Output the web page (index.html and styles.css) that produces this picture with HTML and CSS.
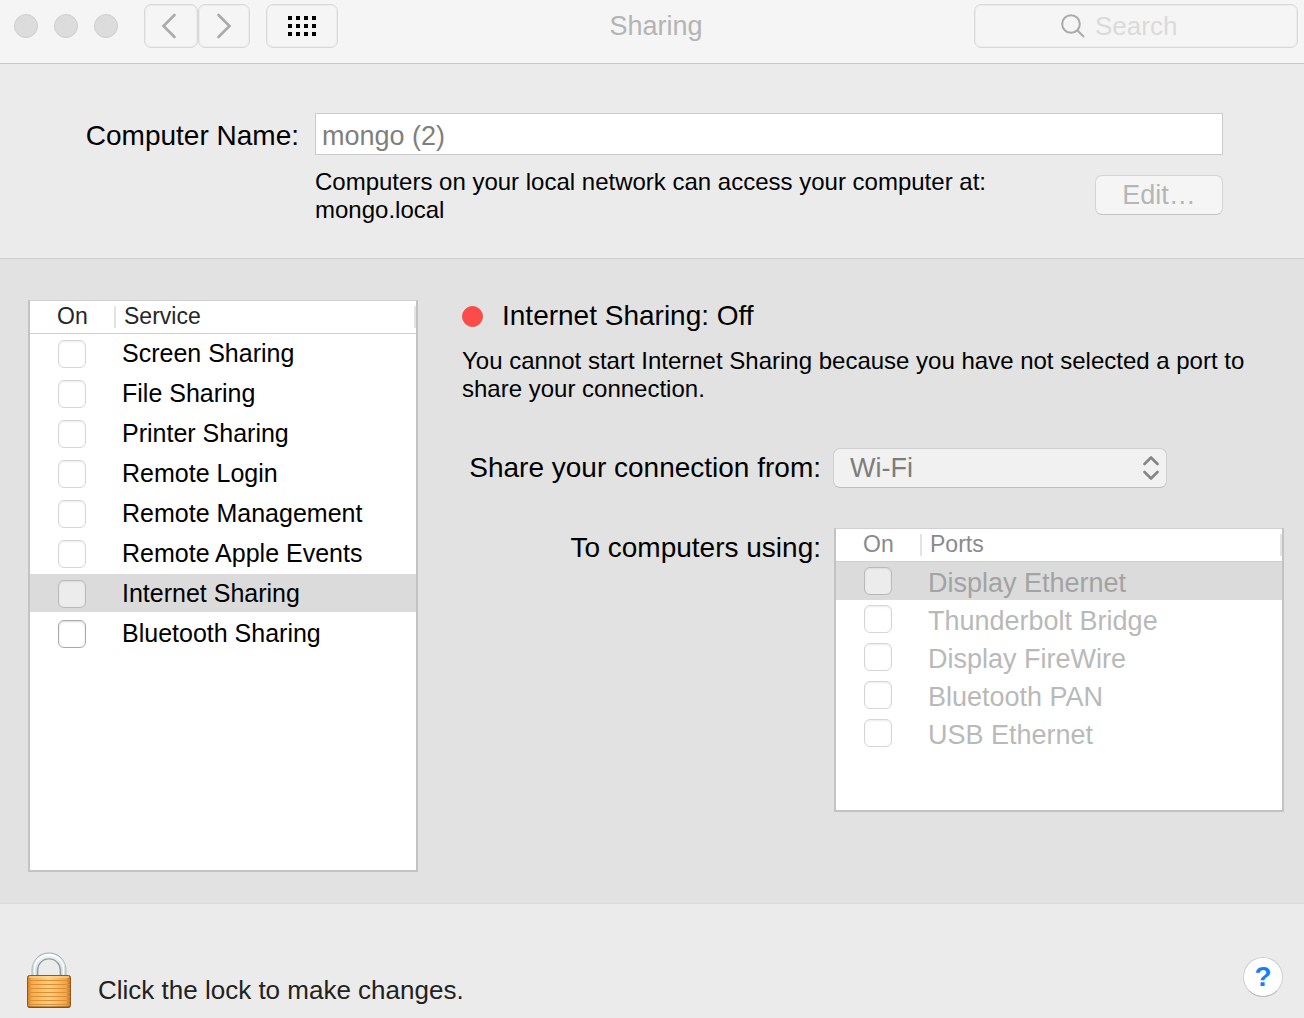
FILE: index.html
```html
<!DOCTYPE html>
<html lang="en">
<head>
<meta charset="utf-8">
<title>Sharing</title>
<link rel="stylesheet" href="styles.css">
</head>
<body>
<header class="toolbar">
  <div class="toolbar-left">
    <div class="lights">
      <button class="light" aria-label="Close"></button>
      <button class="light" aria-label="Minimize"></button>
      <button class="light" aria-label="Zoom"></button>
    </div>
    <div class="nav">
      <button class="tool back" aria-label="Back">
        <svg width="16" height="26" viewBox="0 0 16 26"><path d="M13.500 2 2.500 13l11 11" fill="none" stroke="#aaa" stroke-width="2.600" stroke-linecap="round"/></svg>
      </button>
      <button class="tool forward" aria-label="Forward">
        <svg width="16" height="26" viewBox="0 0 16 26"><path d="M2.500 2l11 11-11 11" fill="none" stroke="#aaa" stroke-width="2.600" stroke-linecap="round"/></svg>
      </button>
    </div>
    <button class="tool grid" aria-label="Show All">
      <svg width="28" height="20" viewBox="0 0 28 20"><path d="M0 0h4v4H0zM8 0h4v4H8zM16 0h4v4h-4zM24 0h4v4h-4zM0 8h4v4H0zM8 8h4v4H8zM16 8h4v4h-4zM24 8h4v4h-4zM0 16h4v4H0zM8 16h4v4H8zM16 16h4v4h-4zM24 16h4v4h-4z"/></svg>
    </button>
  </div>
  <h1 class="title">Sharing</h1>
  <label class="search">
    <svg width="24" height="24" viewBox="0 0 24 24" fill="none" stroke="#aaa" stroke-width="2"><circle cx="10" cy="10" r="8.800"/><path d="M16.200 16.200 23 23"/></svg>
    <input class="search-input" type="search" placeholder="Search" aria-label="Search">
  </label>
</header>

<section class="identity">
  <label class="identity-label" for="computer-name">Computer Name:</label>
  <input class="name-input" id="computer-name" type="text" value="mongo (2)" disabled>
  <div class="identity-info">
    <p class="small">Computers on your local network can access your computer at:<br>mongo.local</p>
    <button class="edit" disabled>Edit…</button>
  </div>
</section>

<main class="sharing">
  <div class="list services">
    <table>
      <thead><tr><th class="on">On</th><th>Service</th></tr></thead>
      <tbody>
        <tr><td><input type="checkbox" id="s1" disabled></td><td><label for="s1">Screen Sharing</label></td></tr>
        <tr><td><input type="checkbox" id="s2" disabled></td><td><label for="s2">File Sharing</label></td></tr>
        <tr><td><input type="checkbox" id="s3" disabled></td><td><label for="s3">Printer Sharing</label></td></tr>
        <tr><td><input type="checkbox" id="s4" disabled></td><td><label for="s4">Remote Login</label></td></tr>
        <tr><td><input type="checkbox" id="s5" disabled></td><td><label for="s5">Remote Management</label></td></tr>
        <tr><td><input type="checkbox" id="s6" disabled></td><td><label for="s6">Remote Apple Events</label></td></tr>
        <tr class="selected"><td><input type="checkbox" id="s7" disabled></td><td><label for="s7">Internet Sharing</label></td></tr>
        <tr><td><input type="checkbox" id="s8"></td><td><label for="s8">Bluetooth Sharing</label></td></tr>
      </tbody>
    </table>
  </div>

  <div class="details">
    <h2 class="status"><span class="dot"></span>Internet Sharing: Off</h2>
    <p class="small">You cannot start Internet Sharing because you have not selected a port to share your connection.</p>
    <div class="form">
      <label class="form-label" for="source">Share your connection from:</label>
      <div class="popup">
        <select id="source" disabled><option>Wi-Fi</option></select>
        <svg width="16" height="24" viewBox="0 0 16 24" fill="none" stroke="#858585" stroke-width="2.600" stroke-linecap="round" stroke-linejoin="round"><path d="M1.500 8 8 1.500 14.500 8M1.500 16 8 22.500 14.500 16"/></svg>
      </div>
      <div class="form-label" id="ports-label">To computers using:</div>
      <div class="list ports">
        <table aria-labelledby="ports-label">
          <thead><tr><th class="on">On</th><th>Ports</th></tr></thead>
          <tbody>
            <tr class="selected"><td><input type="checkbox" id="p1" disabled></td><td><label for="p1">Display Ethernet</label></td></tr>
            <tr><td><input type="checkbox" id="p2" disabled></td><td><label for="p2">Thunderbolt Bridge</label></td></tr>
            <tr><td><input type="checkbox" id="p3" disabled></td><td><label for="p3">Display FireWire</label></td></tr>
            <tr><td><input type="checkbox" id="p4" disabled></td><td><label for="p4">Bluetooth PAN</label></td></tr>
            <tr><td><input type="checkbox" id="p5" disabled></td><td><label for="p5">USB Ethernet</label></td></tr>
          </tbody>
        </table>
      </div>
    </div>
  </div>
</main>

<footer class="footer">
  <button class="lock" aria-labelledby="lock-text">
    <svg width="44" height="56" viewBox="0 0 44 56">
      <defs>
        <linearGradient id="brass" x1="0" x2="1" y1="0" y2="0"><stop offset="0" stop-color="#c87822"/><stop offset=".1" stop-color="#f3ad4c"/><stop offset=".5" stop-color="#ffcf80"/><stop offset=".9" stop-color="#f0a646"/><stop offset="1" stop-color="#b96b1c"/></linearGradient>
        <linearGradient id="steel" x1="0" x2="0" y1="0" y2="1"><stop offset="0" stop-color="#eef3f5"/><stop offset="1" stop-color="#c3ced4"/></linearGradient>
      </defs>
      <path d="M8 26V18a14 14 0 0 1 28 0V26" fill="none" stroke="#a3afb5" stroke-width="6.800"/>
      <path d="M10.500 26V18a11.500 11.500 0 0 1 23 0V26" fill="none" stroke="#7f8d95" stroke-width="1.200"/>
      <path d="M7.800 26V18a14.200 14.200 0 0 1 28.400 0V26" fill="none" stroke="url(#steel)" stroke-width="4.800"/>
      <path d="M7.500 25V17.500a14.500 14.500 0 0 1 29 0V25" fill="none" stroke="#fff" stroke-width="1.500"/>
      <rect x=".5" y="23.500" width="43" height="32" rx="2" fill="url(#brass)" stroke="#94571c"/>
      <path d="M1 28.500h42M1 32.500h42M1 36.500h42M1 40.500h42M1 44.500h42M1 48.500h42M1 52.500h42" stroke="#dc8f34" stroke-width="1.200"/>
      <path d="M2 25h40" stroke="#ffe0a3"/>
      <path d="M1.500 55h41" stroke="#7d4712"/>
    </svg>
  </button>
  <p class="lock-text" id="lock-text">Click the lock to make changes.</p>
  <button class="help" aria-label="Help">?</button>
</footer>
</body>
</html>
```
FILE: styles.css
```css
* { box-sizing: border-box; }

body {
  margin: 0;
  min-height: 100vh;
  display: flex;
  flex-direction: column;
  background: #ebebeb;
  color: #000;
  font: 27px/32px "Liberation Sans", Arial, sans-serif;
}

h1, h2, p { margin: 0; font-weight: normal; }
button, input, select { font: inherit; margin: 0; }
svg { display: block; }

/* Toolbar */
.toolbar {
  display: grid;
  grid-template-columns: 1fr auto 1fr;
  align-items: center;
  padding: 4px 6px 15px 14px;
  background: #f5f5f5;
  border-bottom: 1px solid #cacaca;
}
.toolbar-left { display: flex; align-items: center; gap: 16px; }
.lights { display: flex; gap: 16px; margin-right: 10px; }
.light {
  width: 24px;
  height: 24px;
  padding: 0;
  border: 1px solid #cfcfcf;
  border-radius: 50%;
  background: #dcdcdc;
}
.nav { display: flex; }
.tool {
  height: 44px;
  display: flex;
  align-items: center;
  justify-content: center;
  padding: 0;
  border: 1px solid #d9d9d9;
  border-radius: 7px;
  background: #f5f5f5;
  box-shadow: inset 0 0 0 1px #ececec;
}
.back { width: 54px; padding-right: 4px; }
.forward { width: 52px; }
.grid { width: 72px; }
.title { font-size: 27px; line-height: 44px; color: #b4b4b4; }
.search {
  justify-self: end;
  width: 324px;
  height: 44px;
  display: flex;
  align-items: center;
  justify-content: center;
  gap: 10px;
  border: 1px solid #d9d9d9;
  border-radius: 7px;
  box-shadow: inset 0 0 0 1px #ececec;
}
.search-input {
  width: 116px;
  padding: 0;
  border: 0;
  outline: 0;
  background: none;
  appearance: none;
  font-size: 26px;
}
.search-input::placeholder { color: #dadada; opacity: 1; }

/* Computer name */
.identity {
  display: grid;
  grid-template-columns: 285px 1fr;
  column-gap: 16px;
  row-gap: 13px;
  padding: 49px 81px 34px 14px;
  border-bottom: 1px solid #d0d0d0;
}
.identity-label { justify-self: end; align-self: center; padding-top: 4px; font-size: 28px; }
.name-input {
  min-width: 0;
  height: 42px;
  padding: 4px 6px 0;
  border: 1px solid #cacaca;
  border-radius: 0;
  background: #fff;
  color: #7f7f7f;
}
.identity-info { grid-column: 2; display: flex; justify-content: space-between; }
.small { font-size: 24px; line-height: 28px; }
.edit {
  width: 128px;
  height: 40px;
  margin-top: 7px;
  padding: 0;
  border: 1px solid #d4d4d4;
  border-bottom-color: #c4c4c4;
  border-radius: 7px;
  background: #f5f5f5;
  color: #b6b6b6;
}

/* Sharing panel */
.sharing {
  flex: 1;
  display: flex;
  gap: 44px;
  padding: 41px 20px 31px 28px;
  background: #e2e2e2;
  border-bottom: 1px solid #dadada;
}
.list {
  background: #fff;
  border: 2px solid #c3c3c3;
  border-top: 1px solid #d0d0d0;
}
.services { flex: 0 0 390px; font-size: 25px; }
.ports { height: 284px; color: #b9b9b9; }
table { width: 100%; border-collapse: separate; border-spacing: 0; table-layout: fixed; }
th {
  height: 33px;
  padding: 0 0 2px 8px;
  border-bottom: 1px solid #d0d0d0;
  background: linear-gradient(#e3e3e3, #e3e3e3) no-repeat right 5px / 2px 22px;
  color: #262626;
  font-size: 23px;
  line-height: 28px;
  font-weight: normal;
  text-align: left;
}
.on { width: 86px; padding-left: 27px; }
.ports th { color: #8a8a8a; }
td { height: 40px; padding: 0 0 0 6px; border-bottom: 2px solid transparent; background-clip: padding-box; }
td:first-child { padding-left: 28px; }
.services td:first-child { padding-top: 2px; }
td label { display: block; }
.ports td { height: 38px; border-bottom: 0; }
.ports td label { padding-top: 4px; }
.selected td { background-color: #dbdbdb; }
.ports .selected { color: #a3a3a3; }
td input {
  display: block;
  width: 28px;
  height: 28px;
  appearance: none;
  border: 1px solid #a9a9a9;
  border-radius: 6px;
  background: #fff;
  box-shadow: inset 0 1px 2px #d8d8d8;
}
td input:disabled { border-color: #d6d6d6; box-shadow: inset 0 1px 2px #ececec; }
.selected td input:disabled { border-color: #b9b9b9; background: #ececec; box-shadow: inset 0 1px 2px #dcdcdc; }

.details { flex: 1; min-width: 0; }
.status { display: flex; align-items: center; gap: 19px; margin-bottom: 15px; font-size: 28px; line-height: 32px; }
.dot { width: 21px; height: 21px; border: 1px solid #e8504c; border-radius: 50%; background: #fc4b48; }
.form {
  display: grid;
  grid-template-columns: 359px 1fr;
  column-gap: 13px;
  row-gap: 40px;
  margin-top: 45px;
}
.form-label { justify-self: end; padding-top: 4px; font-size: 28px; }
.popup { display: grid; align-items: center; width: 334px; margin-left: -1px; }
.popup > * { grid-area: 1 / 1; }
.popup svg { justify-self: end; margin-right: 8px; pointer-events: none; }
select {
  width: 100%;
  height: 40px;
  padding: 0 16px;
  appearance: none;
  border: 1px solid #cfcfcf;
  border-bottom-color: #bebebe;
  border-radius: 7px;
  background: #f1f1f1;
  color: #7d7d7d;
  opacity: 1;
}
select:disabled { color: #7d7d7d; opacity: 1; }

/* Footer */
.footer { display: flex; align-items: flex-end; padding: 48px 21px 10px 27px; }
.lock { padding: 0; border: 0; background: none; }
.lock-text { flex: 1; margin-left: 27px; font-size: 26px; line-height: 36px; color: #222; }
.help {
  width: 40px;
  height: 40px;
  margin-bottom: 11px;
  padding: 0;
  border: 1px solid #cfcfcf;
  border-bottom-color: #b8b8b8;
  border-radius: 50%;
  background: #fff;
  color: #147efb;
  font-size: 28px;
  font-weight: bold;
  line-height: 36px;
}
```
